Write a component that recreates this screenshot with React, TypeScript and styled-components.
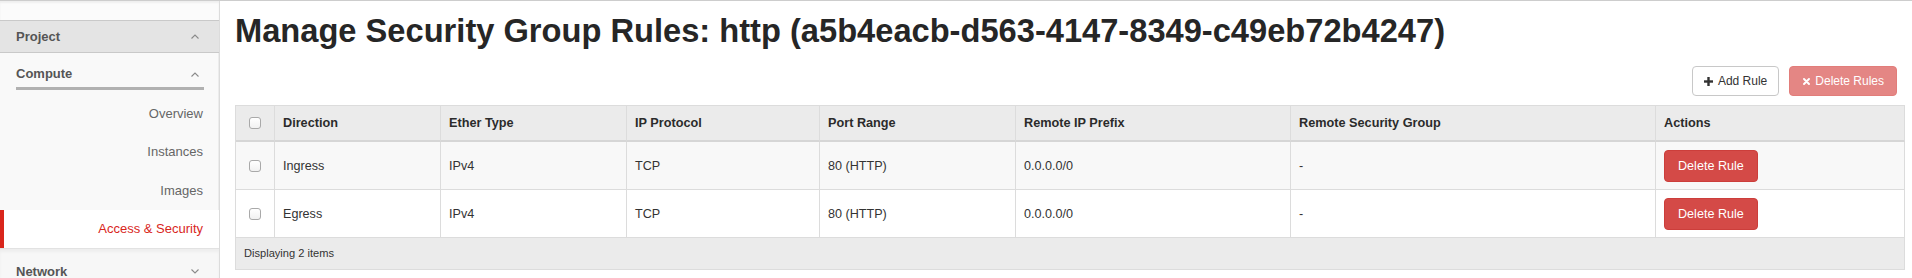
import React from 'react';
import styled, { createGlobalStyle, css } from 'styled-components';

const GlobalStyle = createGlobalStyle`
	* {
		box-sizing: border-box;
	}
	html,
	body {
		margin: 0;
		padding: 0;
		background: #fff;
		height: 278px;
		overflow: hidden;
	}
	body {
		font-family: 'Liberation Sans', Arial, 'Helvetica Neue', sans-serif;
		color: #333;
	}
`;

interface IRule {
	direction: string;
	etherType: string;
	protocol: string;
	portRange: string;
	ipPrefix: string;
	remoteGroup: string;
}

const rules: IRule[] = [
	{
		direction: 'Ingress',
		etherType: 'IPv4',
		protocol: 'TCP',
		portRange: '80 (HTTP)',
		ipPrefix: '0.0.0.0/0',
		remoteGroup: '-',
	},
	{
		direction: 'Egress',
		etherType: 'IPv4',
		protocol: 'TCP',
		portRange: '80 (HTTP)',
		ipPrefix: '0.0.0.0/0',
		remoteGroup: '-',
	},
];

const columns = [
	{ label: 'Direction', width: 166 },
	{ label: 'Ether Type', width: 186 },
	{ label: 'IP Protocol', width: 193 },
	{ label: 'Port Range', width: 196 },
	{ label: 'Remote IP Prefix', width: 275 },
	{ label: 'Remote Security Group', width: 365 },
	{ label: 'Actions', width: 249 },
];

const navItems = ['Overview', 'Instances', 'Images', 'Access & Security'];

const Chevron = ({ up }: { up?: boolean }) => (
	<svg width='8' height='5' viewBox='0 0 8 5'>
		<polyline
			points={up ? '0.5,4.5 4,1 7.5,4.5' : '0.5,0.5 4,4 7.5,0.5'}
			fill='none'
			stroke='#8a8a8a'
			strokeWidth='1.1'
		/>
	</svg>
);

const PlusIcon = () => (
	<svg width='9' height='9' viewBox='0 0 9 9'>
		<rect x='3.3' y='0' width='2.4' height='9' fill='#333' />
		<rect x='0' y='3.3' width='9' height='2.4' fill='#333' />
	</svg>
);

const RemoveIcon = () => (
	<svg width='7' height='7' viewBox='0 0 7 7'>
		<path d='M1 1 L6 6 M6 1 L1 6' stroke='#fff' strokeWidth='1.9' strokeLinecap='round' />
	</svg>
);

export default function App() {
	return (
		<>
			<GlobalStyle />
			<Shell>
				<Sidebar>
					<SidebarTop />
					<PanelHeader $open>
						Project
						<Chevron up />
					</PanelHeader>
					<Group>
						<GroupHeader>
							Compute
							<Chevron up />
						</GroupHeader>
						<GroupRule />
						<NavList>
							{navItems.map((item) => (
								<NavItem key={item} $active={item === 'Access & Security'}>
									{item}
								</NavItem>
							))}
						</NavList>
					</Group>
					<PanelHeader>
						Network
						<Chevron />
					</PanelHeader>
				</Sidebar>
				<Main>
					<Title>Manage Security Group Rules: http (a5b4eacb-d563-4147-8349-c49eb72b4247)</Title>
					<Toolbar>
						<ToolButton>
							<PlusIcon />
							Add Rule
						</ToolButton>
						<ToolButton $danger disabled>
							<RemoveIcon />
							Delete Rules
						</ToolButton>
					</Toolbar>
					<Table>
						<colgroup>
							<col style={{ width: 39 }} />
							{columns.map((c) => (
								<col key={c.label} style={{ width: c.width }} />
							))}
						</colgroup>
						<thead>
							<tr>
								<HeadCell $center>
									<Check type='checkbox' />
								</HeadCell>
								{columns.map((c) => (
									<HeadCell key={c.label}>{c.label}</HeadCell>
								))}
							</tr>
						</thead>
						<tbody>
							{rules.map((r, i) => (
								<Row key={r.direction} $striped={i % 2 === 0}>
									<Cell $center>
										<Check type='checkbox' />
									</Cell>
									<Cell>{r.direction}</Cell>
									<Cell>{r.etherType}</Cell>
									<Cell>{r.protocol}</Cell>
									<Cell>{r.portRange}</Cell>
									<Cell>{r.ipPrefix}</Cell>
									<Cell>{r.remoteGroup}</Cell>
									<Cell>
										<RowButton>Delete Rule</RowButton>
									</Cell>
								</Row>
							))}
						</tbody>
						<tfoot>
							<tr>
								<FootCell colSpan={8}>Displaying 2 items</FootCell>
							</tr>
						</tfoot>
					</Table>
				</Main>
			</Shell>
		</>
	);
}

const Shell = styled.div`
	display: flex;
	height: 278px;
	border-top: 1px solid #cdcdcd;
	overflow: hidden;
`;

const Sidebar = styled.nav`
	width: 220px;
	flex-shrink: 0;
	background: #f9f9f9;
	border-right: 1px solid #dcdcdc;
	box-shadow: inset -1px 0 0 #ececec;
	display: flex;
	flex-direction: column;
	overflow: hidden;

	& > * {
		flex-shrink: 0;
	}
`;

const SidebarTop = styled.div`
	height: 19px;
	background: #fbfbfb;
	box-shadow: inset 0 2px 2px rgba(0, 0, 0, 0.05);
`;

const PanelHeader = styled.div<{ $open?: boolean }>`
	height: 33px;
	display: flex;
	align-items: center;
	justify-content: space-between;
	padding: 0 20px 0 16px;
	font-size: 13px;
	font-weight: 700;
	color: #555;
	${(p) =>
		p.$open
			? css`
					background: #e4e4e4;
					border-top: 1px solid #c9c9c9;
					border-bottom: 1px solid #c9c9c9;
				`
			: css`
					height: 36px;
					padding-top: 10px;
					background: #f7f7f7;
					border-top: 1px solid #e2e2e2;
					box-shadow: inset 0 3px 3px rgba(0, 0, 0, 0.04);
				`}
`;

const Group = styled.div`
	display: flex;
	flex-direction: column;
`;

const GroupHeader = styled.div`
	display: flex;
	align-items: center;
	justify-content: space-between;
	padding: 11px 20px 0 16px;
	line-height: 20px;
	font-size: 13px;
	font-weight: 700;
	color: #555;
`;

const GroupRule = styled.div`
	height: 3px;
	margin: 3px 15px 0 16px;
	background: #b1b1b1;
`;

const NavList = styled.ul`
	list-style: none;
	margin: 0;
	padding: 4px 0 0;
`;

const NavItem = styled.li<{ $active?: boolean }>`
	height: 38.5px;
	display: flex;
	align-items: center;
	justify-content: flex-end;
	padding-right: 16px;
	font-size: 13px;
	color: #666;
	${(p) =>
		p.$active &&
		css`
			background: #fff;
			color: #d9261c;
			border-left: 4px solid #d9261c;
			margin-right: -1px;
			padding-right: 17px;
		`}
`;

const Main = styled.main`
	flex: 1;
	padding: 0 7px 0 15px;
	min-width: 0;
`;

const Title = styled.h1`
	margin: 12px 0 0;
	font-size: 32.65px;
	line-height: 36px;
	font-weight: 700;
	color: #262626;
	white-space: nowrap;
`;

const Toolbar = styled.div`
	display: flex;
	justify-content: flex-end;
	gap: 10px;
	margin-top: 17px;
	margin-bottom: 9px;
	padding-right: 8px;
`;

const ToolButton = styled.button<{ $danger?: boolean }>`
	height: 30px;
	display: inline-flex;
	align-items: center;
	gap: 5px;
	padding: 0 11px;
	border-radius: 4px;
	font-family: inherit;
	font-size: 12px;
	cursor: pointer;
	${(p) =>
		p.$danger
			? css`
					padding: 0 12px 0 13px;
					background: #e48684;
					border: 1px solid #e27d7a;
					color: #fff;
				`
			: css`
					background: #fff;
					border: 1px solid #c8c8c8;
					color: #333;
				`}
`;

const Table = styled.table`
	width: 1670px;
	table-layout: fixed;
	border-collapse: separate;
	border-spacing: 0;
	border-top: 1px solid #dcdcdc;
	border-left: 1px solid #dcdcdc;
	font-size: 12.6px;
	color: #333;
`;

const HeadCell = styled.th<{ $center?: boolean }>`
	padding: 8px;
	line-height: 18px;
	text-align: ${(p) => (p.$center ? 'center' : 'left')};
	font-weight: 700;
	font-size: 12.7px;
	color: #2b2b2b;
	background: #ebebeb;
	border-right: 1px solid #dcdcdc;
	border-bottom: 2px solid #d6d6d6;
	vertical-align: middle;
`;

const Row = styled.tr<{ $striped?: boolean }>`
	background: ${(p) => (p.$striped ? '#f8f8f8' : '#fff')};
`;

const Cell = styled.td<{ $center?: boolean }>`
	padding: 8px 8px 7px;
	line-height: 18px;
	text-align: ${(p) => (p.$center ? 'center' : 'left')};
	border-right: 1px solid #dcdcdc;
	border-bottom: 1px solid #dcdcdc;
	vertical-align: middle;
`;

const FootCell = styled.td`
	padding: 8px;
	line-height: 15px;
	font-size: 11.1px;
	background: #ebebeb;
	border-right: 1px solid #dcdcdc;
	border-bottom: 1px solid #dcdcdc;
`;

const Check = styled.input`
	appearance: none;
	display: block;
	width: 12px;
	height: 12px;
	margin: 0 auto;
	border: 1px solid #a9a9a9;
	border-radius: 3px;
	background: linear-gradient(#fff, #f1f1f1);
`;

const RowButton = styled.button`
	display: block;
	height: 32px;
	padding: 0 13px;
	border-radius: 4px;
	border: 1px solid #cc3e3b;
	background: #d44a47;
	color: #fff;
	font-family: inherit;
	font-size: 12.6px;
	cursor: pointer;
`;
